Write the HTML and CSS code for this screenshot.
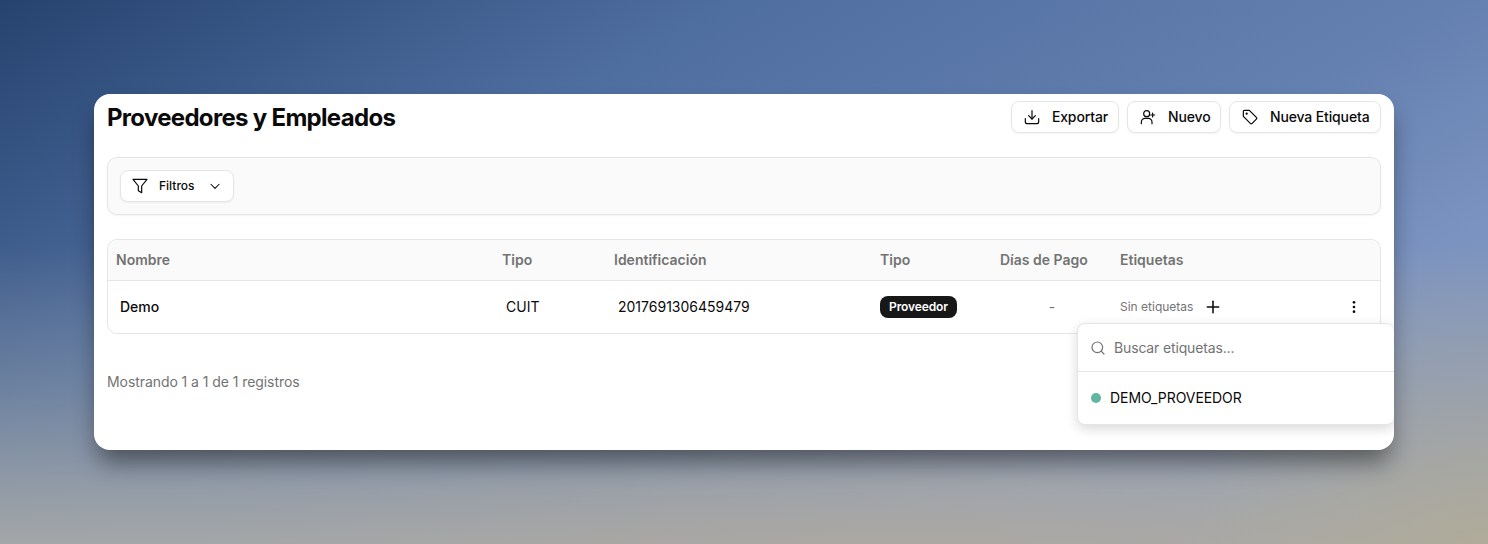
FILE: index.html
```html
<!DOCTYPE html>
<html lang="es">
<head>
    <meta charset="UTF-8" />
    <title>Proveedores y Empleados</title>
    <link rel="stylesheet" href="styles.css">
</head>
<body>
    <main class="card">
        <!-- Cabecera -->
        <header class="card-header">
            <h1>Proveedores y Empleados</h1>
            <div class="actions">
                <button class="btn btn-action">
                    <svg class="icon" viewBox="0 0 24 24"><path d="M12 2.500V15"/><path d="M7 10l5 5 5-5"/><path d="M2 14.500V19a3 3 0 0 0 3 3h14a3 3 0 0 0 3-3v-4.500"/></svg>
                    <span>Exportar</span>
                </button>
                <button class="btn btn-action btn-new">
                    <svg class="icon" viewBox="0 0 24 24"><circle cx="10" cy="7" r="4.500"/><path d="M2 22v-2.500A5.500 5.500 0 0 1 7.500 14h5a5.500 5.500 0 0 1 5.500 5.500V22"/><path d="M19 6v6"/><path d="M16 9h6"/></svg>
                    <span>Nuevo</span>
                </button>
                <button class="btn btn-action btn-tag">
                    <svg class="icon" viewBox="0 0 24 24"><path d="M2 3.500A1.500 1.500 0 0 1 3.500 2H11l10.500 10.500a2 2 0 0 1 0 2.800l-6.200 6.200a2 2 0 0 1-2.800 0L2 11z"/><circle cx="7" cy="7" r=".8"/></svg>
                    <span>Nueva Etiqueta</span>
                </button>
            </div>
        </header>

        <!-- Filtros -->
        <section class="filters">
            <button class="btn btn-filter">
                <svg class="icon" viewBox="0 0 24 24"><path d="M1.500 2h21l-8 10v10l-5-3v-7z"/></svg>
                <span>Filtros</span>
                <svg class="icon chevron" viewBox="0 0 24 24"><path d="m5 9 7 7 7-7"/></svg>
            </button>
        </section>

        <!-- Tabla -->
        <section class="table">
            <div class="table-row table-head">
                <div>Nombre</div>
                <div>Tipo</div>
                <div>Identificación</div>
                <div>Tipo</div>
                <div>Días de Pago</div>
                <div>Etiquetas</div>
            </div>
            <div class="table-row table-body">
                <div class="cell-name">Demo</div>
                <div class="cell-pad">CUIT</div>
                <div class="cell-pad">2017691306459479</div>
                <div><span class="badge">Proveedor</span></div>
                <div class="cell-dash">-</div>
                <div class="cell-tags">
                    <span class="no-tags">Sin etiquetas</span>
                    <svg class="icon plus" viewBox="0 0 24 24"><path d="M12 3.500v17"/><path d="M3.500 12h17"/></svg>
                    <svg class="dots" viewBox="0 0 24 24"><circle cx="12" cy="5" r="2"/><circle cx="12" cy="12" r="2"/><circle cx="12" cy="19" r="2"/></svg>
                </div>
            </div>
        </section>

        <p class="summary">Mostrando 1 a 1 de 1 registros</p>

        <!-- Selector de etiquetas -->
        <div class="popover">
            <div class="popover-search">
                <svg class="icon search" viewBox="0 0 24 24"><circle cx="11" cy="11" r="8"/><path d="m21 21-4.300-4.300"/></svg>
                <span>Buscar etiquetas...</span>
            </div>
            <div class="popover-item">
                <span class="dot"></span>
                <span>DEMO_PROVEEDOR</span>
            </div>
        </div>
    </main>
</body>
</html>
```

FILE: styles.css
```css
* {
    margin: 0;
    padding: 0;
    box-sizing: border-box;
    font-family: 'Inter', sans-serif;
}

html, body {
    height: 544px;
    overflow: hidden;
}

/* Fondo */
body {
    padding: 94px;
    background:
        radial-gradient(circle at 100% 100%, rgba(182, 172, 140, .55), rgba(182, 172, 140, 0) 300px),
        radial-gradient(ellipse 700px 90px at 60% 100%, rgba(175, 165, 155, .5), rgba(175, 165, 155, 0)),
        linear-gradient(180deg, rgba(172, 172, 165, 0) 45%, rgba(172, 172, 165, .35) 72%, rgba(172, 172, 168, .65) 87%, rgba(172, 172, 168, .9) 100%),
        linear-gradient(150deg, #26436f 0%, #4f6ea0 30%, #6480b0 60%, #7b93c0 77%, #8497c4 100%);
}

/* Tarjeta principal */
.card {
    position: relative;
    height: 356px;
    padding: 7px 13px 0;
    background-color: white;
    border-radius: 16px;
    box-shadow: 0 16px 24px -4px rgba(0, 0, 0, .45);
    overflow: hidden;
}

.card-header {
    display: flex;
    justify-content: space-between;
    height: 32px;
}

h1 {
    font-size: 24px;
    font-weight: 700;
    line-height: 34px;
    letter-spacing: -.69px;
    color: #0a0a0a;
}

.actions {
    display: flex;
    gap: 8px;
}

/* Botones */
.btn {
    display: flex;
    align-items: center;
    height: 32px;
    background-color: white;
    border: 1px solid #e5e5e5;
    border-radius: 8px;
    box-shadow: 0 1px 2px rgba(0, 0, 0, .05);
    font-size: 14px;
    font-weight: 500;
    color: #0a0a0a;
}

.btn span {
    margin-top: -2px;
}

.icon {
    width: 16px;
    height: 16px;
    flex: none;
    fill: none;
    stroke: currentColor;
    stroke-width: 1.800;
    stroke-linecap: round;
    stroke-linejoin: round;
}

.btn-action {
    padding: 0 10px 0 12px;
    gap: 12px;
    letter-spacing: -.14px;
}

.btn-new {
    width: 94px;
}

.btn-tag {
    width: 152px;
}

.filters {
    height: 58px;
    margin-top: 24px;
    padding: 12px;
    background-color: #fafafa;
    border: 1px solid #e5e5e5;
    border-radius: 10px;
    box-shadow: 0 1px 2px rgba(0, 0, 0, .05);
}

.btn-filter {
    width: 114px;
    padding: 0 11px;
    gap: 12px;
    font-size: 12px;
}

.btn-filter span {
    margin-left: -1px;
}

.chevron {
    width: 14px;
    height: 14px;
    margin-left: 1px;
}

/* Tabla */
.table {
    height: 95px;
    margin-top: 24px;
    border: 1px solid #e5e5e5;
    border-radius: 10px;
    overflow: hidden;
}

.table-row {
    display: grid;
    grid-template-columns: 386px 112px 266px 120px 120px 1fr;
    align-items: center;
}

.table-head {
    height: 41px;
    padding-bottom: 2px;
    background-color: #fafafa;
    border-bottom: 1px solid #e5e5e5;
    font-size: 14px;
    font-weight: 600;
    color: #737373;
}

.table-head > div {
    padding-left: 8px;
}

.table-body {
    height: 52px;
    padding-bottom: 1px;
    font-size: 14px;
    color: #0a0a0a;
}

.table-body > div {
    padding-left: 8px;
}

.table-body > .cell-name {
    padding-left: 12px;
    font-weight: 500;
}

.table-body > .cell-pad {
    padding-left: 12px;
}

.badge {
    display: inline-block;
    height: 22px;
    padding: 0 9px;
    background-color: #171717;
    border-radius: 8px;
    font-size: 12px;
    font-weight: 600;
    line-height: 22px;
    letter-spacing: -.1px;
    color: white;
}

.table-body > .cell-dash {
    padding-left: 0;
    text-align: center;
    color: #737373;
}

.cell-tags {
    display: flex;
    align-items: center;
}

.no-tags {
    font-size: 12px;
    color: #737373;
}

.plus {
    margin-left: 12px;
    stroke-width: 2.300;
}

.dots {
    width: 16px;
    height: 16px;
    margin-left: auto;
    margin-right: 18px;
    fill: #0a0a0a;
}

.summary {
    margin-top: 38px;
    font-size: 14px;
    line-height: 20px;
    letter-spacing: -.07px;
    color: #737373;
}

/* Lista desplegable */
.popover {
    position: absolute;
    top: 229px;
    left: 983px;
    width: 317px;
    height: 102px;
    background-color: white;
    border: 1px solid #e5e5e5;
    border-right: none;
    border-radius: 8px;
    box-shadow: 0 4px 12px rgba(0, 0, 0, .15);
}

.popover-search {
    display: flex;
    align-items: center;
    gap: 8px;
    height: 48px;
    padding-left: 12px;
    border-bottom: 1px solid #e5e5e5;
    font-size: 14px;
    letter-spacing: -.15px;
    color: #737373;
}

.popover-item {
    display: flex;
    align-items: center;
    gap: 9px;
    height: 51px;
    padding-left: 13px;
    font-size: 14px;
    letter-spacing: -.07px;
    color: #0a0a0a;
}

.dot {
    width: 10px;
    height: 10px;
    background-color: #62b5a3;
    border-radius: 50%;
}
```
